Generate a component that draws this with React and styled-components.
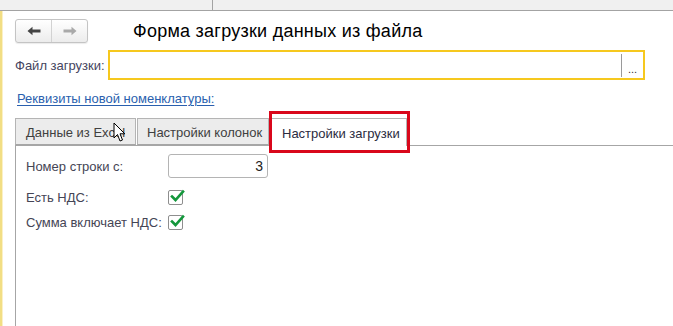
import React from "react";
import styled, { createGlobalStyle } from "styled-components";

const Global = createGlobalStyle`
  html, body { margin: 0; padding: 0; background: #fff; overflow: hidden; }
  body { font-family: "Liberation Sans", Arial, sans-serif; font-size: 13px; color: #333; }
`;

const Page = styled.div`
  width: 673px;
  height: 326px;
  display: flex;
  flex-direction: column;
  overflow: hidden;
`;

const TopStrip = styled.div`
  height: 10px;
  flex: none;
  display: flex;
  background: #f0f0f0;
  border-bottom: 1px solid #a3a3a3;
`;

const TopCell = styled.div`
  width: ${(p) => p.$w}px;
  flex: ${(p) => (p.$w ? "none" : "1")};
  border-right: ${(p) => (p.$sep ? "1px solid #a3a3a3" : "none")};
`;

const Body = styled.div`
  flex: 1;
  display: flex;
  min-height: 0;
`;

const Stripe = styled.div`
  width: 2px;
  flex: none;
  background: #f2de84;
  border-right: 1px solid #fbf0c6;
`;

const Content = styled.div`
  flex: 1;
  padding: 8px 0 0 12px;
  display: flex;
  flex-direction: column;
  min-width: 0;
`;

const Header = styled.div`
  display: flex;
  align-items: center;
  height: 24px;
`;

const NavGroup = styled.div`
  display: flex;
  width: 73px;
  height: 24px;
  box-sizing: border-box;
  border: 1px solid #c4c4c4;
  border-radius: 3px;
  background: linear-gradient(#ffffff, #ececec);
  box-shadow: 0 1px 1px rgba(0, 0, 0, 0.08);
  overflow: hidden;
`;

const NavBtn = styled.div`
  flex: 1;
  display: flex;
  align-items: center;
  justify-content: center;
  & + & { border-left: 1px solid #d2d2d2; }
`;

const Title = styled.div`
  margin-left: 45px;
  font-size: 18px;
  letter-spacing: 0.25px;
  color: #000;
  white-space: nowrap;
`;

const FieldRow = styled.div`
  display: flex;
  align-items: center;
  margin-top: 7px;
  height: 30px;
`;

const FieldLabel = styled.div`
  width: 93px;
  color: #454560;
  white-space: nowrap;
`;

const FileInput = styled.div`
  width: 537px;
  height: 30px;
  box-sizing: border-box;
  border: 2px solid #f6c81e;
  background: #fff;
  display: flex;
  justify-content: flex-end;
  align-items: center;
`;

const Choose = styled.div`
  width: 22px;
  height: 23px;
  border-left: 1px solid #9a9a9a;
  display: flex;
  align-items: flex-end;
  justify-content: center;
  font-size: 11px;
  color: #333;
  line-height: 14px;
  padding-bottom: 1px;
  box-sizing: border-box;
`;

const Link = styled.a`
  margin: 11px 0 0 2px;
  align-self: flex-start;
  color: #2a5fae;
  text-decoration: underline;
  text-underline-offset: 2px;
  line-height: 15px;
  cursor: pointer;
`;

const TabBar = styled.div`
  display: flex;
  margin-top: 12px;
  height: 27px;
  box-sizing: border-box;
`;

const Tab = styled.div`
  position: relative;
  box-sizing: border-box;
  height: ${(p) => (p.$active ? "28px" : "27px")};
  width: ${(p) => p.$w}px;
  margin-right: ${(p) => (p.$active ? 0 : 1)}px;
  padding-left: ${(p) => p.$pl}px;
  display: flex;
  align-items: center;
  border: 1px solid #b4b4b4;
  border-bottom: ${(p) => (p.$active ? "none" : "1px solid #a6a6a6")};
  background: ${(p) => (p.$active ? "#fff" : "#ececec")};
  color: ${(p) => (p.$active ? "#2b2b40" : "#404040")};
  white-space: nowrap;
  z-index: ${(p) => (p.$active ? 1 : 0)};
  padding-top: 1px;
`;

const Highlight = styled.div`
  position: absolute;
  left: -2px;
  right: -4px;
  top: -8px;
  bottom: -7px;
  border: 3px solid #d9071b;
  pointer-events: none;
`;

const Cursor = styled.svg`
  position: absolute;
  left: 97px;
  top: 3px;
`;

const Panel = styled.div`
  flex: 1;
  border-top: 1px solid #a6a6a6;
  border-left: 1px solid #a6a6a6;
  padding: 8px 0 0 10px;
`;

const Row = styled.div`
  display: grid;
  grid-template-columns: 142px auto;
  align-items: center;
  height: ${(p) => p.$h}px;
  margin-top: ${(p) => p.$mt || 0}px;
`;

const RowLabel = styled.div`
  color: #454555;
  white-space: nowrap;
  padding-top: 1px;
`;

const NumInput = styled.div`
  width: 100px;
  height: 24px;
  box-sizing: border-box;
  border: 1px solid #b4b4b4;
  border-radius: 3px;
  text-align: right;
  padding-right: 4px;
  line-height: 22px;
  color: #222;
  font-size: 14px;
`;

const Check = styled.div`
  width: 15px;
  height: 15px;
  box-sizing: border-box;
  border: 1px solid #8e8e8e;
  border-radius: 2px;
  background: #fff;
  position: relative;
  svg { position: absolute; left: 1px; top: -2px; }
`;

const CheckMark = () => (
  <svg width="15" height="14" viewBox="0 0 15 14">
    <path d="M2 7.5 L5.5 11 L13 2.5" fill="none" stroke="#14973c" strokeWidth="2.6" strokeLinecap="square" />
  </svg>
);

const Arrow = ({ dir, color }) => (
  <svg width="14" height="10" viewBox="0 0 14 10">
    <g transform={dir === "right" ? "translate(14,0) scale(-1,1)" : undefined}>
      <path d="M0.5 5 L5.5 0.8 L5.5 3.6 L13.5 3.6 L13.5 6.4 L5.5 6.4 L5.5 9.2 Z" fill={color} />
    </g>
  </svg>
);

export default function App() {
  return (
    <>
      <Global />
      <Page>
        <TopStrip>
          <TopCell $w={212} $sep />
          <TopCell />
        </TopStrip>
        <Body>
          <Stripe />
          <Content>
            <Header>
              <NavGroup>
                <NavBtn><Arrow dir="left" color="#444" /></NavBtn>
                <NavBtn><Arrow dir="right" color="#a9a9a9" /></NavBtn>
              </NavGroup>
              <Title>Форма загрузки данных из файла</Title>
            </Header>
            <FieldRow>
              <FieldLabel>Файл загрузки:</FieldLabel>
              <FileInput>
                <Choose>...</Choose>
              </FileInput>
            </FieldRow>
            <Link>Реквизиты новой номенклатуры:</Link>
            <TabBar>
              <Tab $w={121} $pl={10}>
                Данные из Excel
                <Cursor width="13" height="21" viewBox="0 0 13 21">
                  <path d="M1 1 L1 16 L4.5 12.5 L7 19 L9.5 18 L7 11.8 L11.8 11.8 Z" fill="#fff" stroke="#000" strokeWidth="1" strokeLinejoin="round" />
                </Cursor>
              </Tab>
              <Tab $w={132} $pl={9}>Настройки колонок</Tab>
              <Tab $w={137} $pl={11} $active>
                Настройки загрузки
                <Highlight />
              </Tab>
            </TabBar>
            <Panel>
              <Row $h={24}>
                <RowLabel>Номер строки с:</RowLabel>
                <NumInput>3</NumInput>
              </Row>
              <Row $h={20} $mt={9}>
                <RowLabel>Есть НДС:</RowLabel>
                <Check><CheckMark /></Check>
              </Row>
              <Row $h={20} $mt={5}>
                <RowLabel>Сумма включает НДС:</RowLabel>
                <Check><CheckMark /></Check>
              </Row>
            </Panel>
          </Content>
        </Body>
      </Page>
    </>
  );
}
